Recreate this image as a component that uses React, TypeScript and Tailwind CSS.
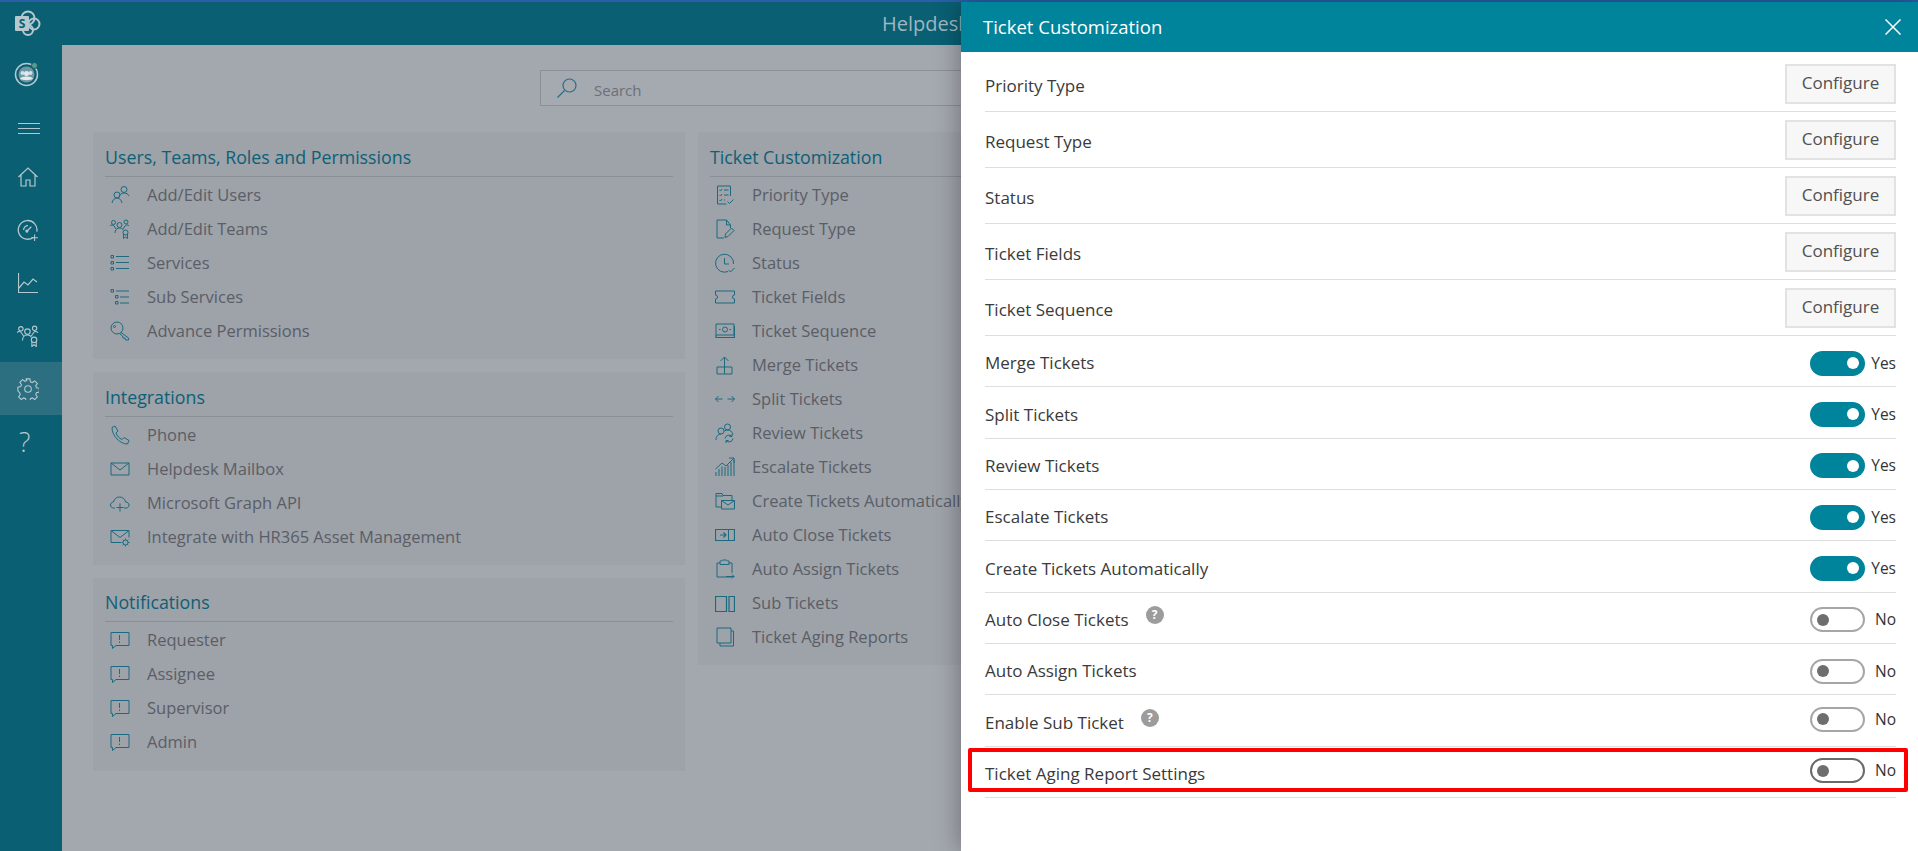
import React from 'react';

const Ico = ({ children, size = 20, className = '' }: { children: React.ReactNode; size?: number; className?: string }) => (
  <svg width={size} height={size} viewBox="0 0 20 20" fill="none" stroke="currentColor" strokeWidth={1} className={className}>
    {children}
  </svg>
);

const bell = (
  <Ico>
    <path d="M1 2.500h18v13H6l-3.500 3v-3H1z" />
    <path d="M9.500 5v5M9.500 11.500v1.500" />
  </Ico>
);

const teamsPaths = (
  <>
    <circle cx="3.500" cy="3.500" r="2" />
    <circle cx="16" cy="3" r="2" />
    <circle cx="9.500" cy="6" r="2.500" />
    <path d="M0 7c1-1.500 3-1.500 4 0l2 3M19 7c-1-1.500-3-1.500-4 0l-2 3M5 14c0-3 2-5 4.500-5 1.500 0 3 .8 3.500 2" />
    <circle cx="15.500" cy="13.500" r="2.500" />
    <path d="M13.500 15v4.500l2-1.500 2 1.500V15" />
  </>
);

const icons: Record<string, React.ReactNode> = {
  users: (
    <Ico>
      <circle cx="14" cy="4.500" r="3" />
      <path d="M9 12c.5-2.500 2.500-4 5-4s4 1 5 3" />
      <circle cx="7" cy="10" r="3" />
      <path d="M2 18c.5-3 2.500-5 5-5s4.500 2 5 5" />
    </Ico>
  ),
  teams: <Ico>{teamsPaths}</Ico>,
  services: (
    <Ico>
      <path d="M1 2.500h2.500V5H1zM1 8.500h2.500V11H1zM1 14.500h2.500V17H1z" />
      <path d="M6 3.500h13M6 9.500h13M6 15.500h13" />
    </Ico>
  ),
  subservices: (
    <Ico>
      <path d="M1 2.500h2.500V5H1zM5.500 8.500H8V11H5.500zM5.500 14.500H8V17H5.500z" />
      <path d="M6 4h13M10 10h9M10 16h9" />
    </Ico>
  ),
  key: (
    <Ico>
      <circle cx="7" cy="7" r="6" />
      <circle cx="4.500" cy="5.500" r="1" />
      <path d="M11 11.500l7.500 5.500v2h-3l-.5-2h-2l-.5-2-3-2.500" />
    </Ico>
  ),
  phone: (
    <Ico>
      <path d="M2 2.500L5 1l3 5-2 2c1 3 3 5 6 6.500l2-2 5 3-1.500 3.500C10 19 2 11 2 2.500z" />
    </Ico>
  ),
  mail: (
    <Ico>
      <path d="M1 4h18v12H1z" />
      <path d="M1 4l9 7 9-7" />
    </Ico>
  ),
  cloud: (
    <Ico>
      <path d="M5 15H3.500C1.500 15 .5 13.500 .5 12s1-3 3-3c.5-3 3-5 6-5s5.500 2 6 5c2 0 3.500 1.500 3.500 3s-1 3-3 3h-2" />
      <path d="M10 10.500v8M6.500 14.500h7" />
    </Ico>
  ),
  mailgear: (
    <Ico>
      <path d="M11 15.500H1V3.500h18v7" />
      <path d="M1 3.500l9 7 9-7" />
      <circle cx="15.500" cy="15.500" r="2.500" />
      <path d="M15.500 11.500v1.500M15.500 18v1.500M11.500 15.500H13M18 15.500h1.500M12.700 12.700l1 1M17.300 17.300l1 1M18.300 12.700l-1 1M13.700 17.300l-1 1" />
    </Ico>
  ),
  checklist: (
    <Ico>
      <path d="M15.500 11V1H2.500v18h9" />
      <path d="M4.500 5l1 1 1.500-2M4.500 10l1 1 1.500-2M4.500 15l1 1 1.500-2M9 5h4.500M9 10h4.500M9 15h1" />
      <path d="M12.500 16.500l2 2 4-4" />
    </Ico>
  ),
  docedit: (
    <Ico>
      <path d="M9 19H2V1h9.500l4 5v3" />
      <path d="M11.500 1v5h4" />
      <path d="M10 18.500l.5-3.500 6-6 2.500 2.500-6 6z" />
    </Ico>
  ),
  clock: (
    <Ico>
      <path d="M13 18.500A9 9 0 1 1 18.500 11" />
      <path d="M9.500 5v6h4.500" />
      <path d="M13.500 17l2 2 4-4" />
    </Ico>
  ),
  ticket: (
    <Ico>
      <path d="M.5 4h19v4a2 2 0 0 0 0 4v4H.5v-4a2 2 0 0 0 0-4z" />
    </Ico>
  ),
  money: (
    <Ico>
      <path d="M1 3h18v11H1z" />
      <path d="M1 14v2.500h18.500V5" strokeWidth={1.200} />
      <circle cx="10" cy="8.500" r="2.500" />
      <path d="M4 8.500h1.500M14.500 8.500H16" />
    </Ico>
  ),
  merge: (
    <Ico>
      <path d="M2 12h7.500v7H2zM9.500 12H17v7H9.500z" />
      <path d="M9.500 12V2M5.500 6l4-4 4 4" />
    </Ico>
  ),
  split: (
    <Ico>
      <path d="M.5 10h7M3.500 7l-3 3 3 3M12.500 10h7M16.500 7l3 3-3 3" />
    </Ico>
  ),
  review: (
    <Ico>
      <circle cx="12.500" cy="4" r="3" />
      <circle cx="6" cy="8" r="3" />
      <path d="M1 17c0-3.500 2-6 5-6M9.500 8c1-.8 2-1 3-1 3 0 5 2 5.500 4.500" />
      <path d="M10 15.500a4 4 0 0 1 7-2M18 15.500a4 4 0 0 1-7 2M17 11v2.500h-2.500M11 20v-2.500h2.500" />
    </Ico>
  ),
  chartup: (
    <Ico>
      <path d="M1 19v-4M4 19v-7M7 19V9.500M10 19v-9M13 19V8M16 19V5M19 19V3" />
      <path d="M.5 12L7 6l4 3 8-8M14 1h5v5" />
    </Ico>
  ),
  folder: (
    <Ico>
      <path d="M6 16H1V2.500h6l1 2h9V9" />
      <path d="M6.500 9.500h13V18h-13z" />
      <path d="M6.500 9.500l6.500 4.500 6.500-4.500" />
      <path d="M1 5h7" />
    </Ico>
  ),
  closebox: (
    <Ico>
      <path d="M.5 4.500h19v11H.5z" strokeWidth={1.200} />
      <path d="M13.500 4.500v11" />
      <path d="M5 10h5.500M8.500 7.500L11 10l-2.500 2.500" strokeWidth={1.200} />
    </Ico>
  ),
  clipboard: (
    <Ico>
      <path d="M14 4h3v10M17 18H2V4h3" />
      <path d="M5 2h1.500l1-1h4l1 1H14v3.500H5z" />
      <path d="M11 17.500h8M17 15.500l2 2-2 2" />
    </Ico>
  ),
  sub: (
    <Ico>
      <path d="M.5 3.500h11v15H.5zM14 3.500h5.500v15H14z" strokeWidth={1.200} />
    </Ico>
  ),
  copy: (
    <Ico>
      <path d="M2 1h14v15H2z" />
      <path d="M5 16v3h13.500V4H16" />
    </Ico>
  ),
};

const sections = [
  {
    title: 'Users, Teams, Roles and Permissions',
    items: [
      ['users', 'Add/Edit Users'],
      ['teams', 'Add/Edit Teams'],
      ['services', 'Services'],
      ['subservices', 'Sub Services'],
      ['key', 'Advance Permissions'],
    ],
  },
  {
    title: 'Integrations',
    items: [
      ['phone', 'Phone'],
      ['mail', 'Helpdesk Mailbox'],
      ['cloud', 'Microsoft Graph API'],
      ['mailgear', 'Integrate with HR365 Asset Management'],
    ],
  },
  {
    title: 'Notifications',
    items: [
      ['bell', 'Requester'],
      ['bell', 'Assignee'],
      ['bell', 'Supervisor'],
      ['bell', 'Admin'],
    ],
  },
];

const ticketSection = {
  title: 'Ticket Customization',
  items: [
    ['checklist', 'Priority Type'],
    ['docedit', 'Request Type'],
    ['clock', 'Status'],
    ['ticket', 'Ticket Fields'],
    ['money', 'Ticket Sequence'],
    ['merge', 'Merge Tickets'],
    ['split', 'Split Tickets'],
    ['review', 'Review Tickets'],
    ['chartup', 'Escalate Tickets'],
    ['folder', 'Create Tickets Automatically'],
    ['closebox', 'Auto Close Tickets'],
    ['clipboard', 'Auto Assign Tickets'],
    ['sub', 'Sub Tickets'],
    ['copy', 'Ticket Aging Reports'],
  ],
};

function Card({ title, items, compact }: { title: string; items: string[][]; compact?: boolean }) {
  return (
    <div className={`overflow-hidden bg-[#9ea2a9] px-3 ${compact ? 'pb-[12px]' : 'pb-[11px]'}`}>
      <div className={`flex items-center border-b border-[#8a8e95] pt-[6px] text-[17.8px] font-medium text-[#0d6076] ${compact ? 'h-[44px]' : 'h-[45px]'}`}>
        {title}
      </div>
      <ul className="pt-[1px]">
        {items.map(([icon, label]) => (
          <li key={label} className="flex h-[34px] items-center whitespace-nowrap text-[16.5px] text-[#5a5e66]">
            <span className="ml-[5px] mr-[17px] flex w-[20px] justify-center text-[#1c6a80]">
              {icon === 'bell' ? bell : icons[icon]}
            </span>
            {label}
          </li>
        ))}
      </ul>
    </div>
  );
}

function Sidebar() {
  return (
    <aside className="flex w-[62px] shrink-0 flex-col bg-[#0a5f73]">
      <div className="flex h-[43px] items-center pl-[14px]">
        <svg width="27" height="27" viewBox="0 0 27 27" fill="none">
          <circle cx="14" cy="8" r="6.500" stroke="#b4c8ce" strokeWidth="2" />
          <circle cx="20" cy="14" r="5.500" stroke="#b4c8ce" strokeWidth="2" />
          <circle cx="14" cy="20" r="5" stroke="#b4c8ce" strokeWidth="2" />
          <rect x="1" y="6" width="14" height="15" rx="1" fill="#b4c8ce" />
          <text x="8" y="18" textAnchor="middle" fontSize="12" fontWeight="700" fill="#0a5f73" fontFamily="'Open Sans', sans-serif">S</text>
        </svg>
      </div>
      <div className="flex h-[58px] items-center pl-[14px]">
        <svg width="26" height="26" viewBox="0 0 26 26" fill="none">
          <circle cx="12.500" cy="13.500" r="11" stroke="#b4c8ce" strokeWidth="1.500" />
          <circle cx="12.500" cy="13.500" r="8" fill="#6f98a5" />
          <circle cx="8.500" cy="12" r="2" fill="#d5e0e3" />
          <circle cx="16.500" cy="12" r="2" fill="#d5e0e3" />
          <circle cx="12.500" cy="12.500" r="2.500" fill="#e2eaec" />
          <path d="M6 18c.5-3.500 12.500-3.500 13 0-3 1.500-10 1.500-13 0z" fill="#e2eaec" />
          <circle cx="20.500" cy="4.500" r="3" fill="#5f9a85" stroke="#0a5f73" />
        </svg>
      </div>
      <div className="ml-[18px] flex h-[47px] w-[22px] flex-col gap-[4px] pt-[20px]">
        <span className="h-px bg-[#b4c8ce]" />
        <span className="h-px bg-[#b4c8ce]" />
        <span className="h-px bg-[#b4c8ce]" />
      </div>
      <nav className="text-[#b4c8ce]">
        <div className="flex h-[53px] items-center pl-[18px]">
          <Ico size={20}>
            <path d="M.5 10L10 1l9.500 9M3 8v11h5v-6h4v6h5V8" strokeWidth={1.200} />
          </Ico>
        </div>
        <div className="flex h-[53px] items-center pl-[17px]">
          <Ico size={22}>
            <path d="M15 16.500a8.500 8.500 0 1 1 3-5" strokeWidth={1.200} />
            <path d="M6 10a4 4 0 0 1 4-4M9 11l4-4" strokeWidth={1.200} />
            <circle cx="9" cy="11" r="1" fill="currentColor" />
            <path d="M13 17h6M16 14v6" />
          </Ico>
        </div>
        <div className="flex h-[53px] items-center pl-[18px]">
          <Ico size={20}>
            <path d="M.5 0v19.500H20" strokeWidth={1.200} />
            <path d="M1 15l5-6 4 3 5-6 4 3" strokeWidth={1.200} />
          </Ico>
        </div>
        <div className="flex h-[53px] items-center pl-[17px]">
          <Ico size={22}>{teamsPaths}</Ico>
        </div>
        <div className="flex h-[53px] items-center bg-[#2c6f81] pl-[17px]">
          <Ico size={22}>
            <circle cx="10" cy="10" r="3" />
            <path d="M8.300 .8h3.400l.5 2.600 1.700.7 2.200-1.500 2.400 2.400-1.500 2.200.7 1.700 2.600.5v3.400l-2.600.5-.7 1.700 1.500 2.200-2.400 2.400-2.200-1.500-1.700.7-.5 2.600H8.300l-.5-2.600-1.700-.7-2.200 1.500-2.400-2.400 1.500-2.200-.7-1.700L.8 11.700V8.300l2.600-.5.700-1.700-1.500-2.200 2.400-2.400 2.200 1.500 1.700-.7z" />
          </Ico>
        </div>
        <div className="flex h-[53px] items-center pl-[19px] text-[27px] font-light leading-none">?</div>
      </nav>
    </aside>
  );
}

function Toggle({ on, dark, lift }: { on: boolean; dark?: boolean; lift?: boolean }) {
  return (
    <div className={`flex w-[86px] shrink-0 items-center justify-between ${lift ? '-translate-y-[3px]' : ''}`}>
      {on ? (
        <span className="flex h-[25px] w-[55px] items-center justify-end rounded-full bg-[#00849b] pr-[6px]">
          <span className="h-[12px] w-[12px] rounded-full bg-white" />
        </span>
      ) : (
        <span className={`flex h-[25px] w-[55px] items-center rounded-full border-2 bg-white pl-[5px] ${dark ? 'border-[#6a6a6a]' : 'border-[#a6a6a6]'}`}>
          <span className="h-[12px] w-[12px] rounded-full bg-[#6e6e6e]" />
        </span>
      )}
      <span className="text-[15.5px] font-normal text-[#333]">{on ? 'Yes' : 'No'}</span>
    </div>
  );
}

const configureRows = ['Priority Type', 'Request Type', 'Status', 'Ticket Fields', 'Ticket Sequence'];
const toggleRows: { label: string; on: boolean; help?: boolean; dark?: boolean; lift?: boolean }[] = [
  { label: 'Merge Tickets', on: true },
  { label: 'Split Tickets', on: true },
  { label: 'Review Tickets', on: true },
  { label: 'Escalate Tickets', on: true },
  { label: 'Create Tickets Automatically', on: true },
  { label: 'Auto Close Tickets', on: false, help: true },
  { label: 'Auto Assign Tickets', on: false },
  { label: 'Enable Sub Ticket', on: false, help: true, lift: true },
  { label: 'Ticket Aging Report Settings', on: false, dark: true, lift: true },
];

function Drawer() {
  return (
    <div className="absolute bottom-0 right-0 top-[2px] w-[957px] bg-white shadow-[0_0_24px_rgba(0,0,0,0.35)]">
      <div className="flex h-[50px] items-center justify-between bg-[#00849b] pl-[22px] pr-[17px] text-white">
        <span className="text-[18.5px] font-medium">Ticket Customization</span>
        <svg width="16" height="16" viewBox="0 0 16 16" stroke="white" strokeWidth="1.500">
          <path d="M.5 .5l15 15M15.500 .5l-15 15" />
        </svg>
      </div>
      <div className="pl-[24px] pr-[22px] pt-[4px] text-[17px] font-medium text-[#3a3a3a]">
        {configureRows.map(label => (
          <div key={label} className="flex h-[56px] items-center justify-between border-b border-[#dedede]">
            <span className="translate-y-[2px]">{label}</span>
            <button className="h-[40px] w-[111px] border-2 border-[#e2e2e2] bg-[#f7f7f7] pb-[2px] text-[17px] font-normal text-[#505050]">
              Configure
            </button>
          </div>
        ))}
        {toggleRows.map(row => (
          <div key={row.label} className="flex h-[51.33px] items-center justify-between border-b border-[#dedede] pt-[4px]">
            <span className="flex items-start">
              {row.label}
              {row.help && (
                <span className="ml-[17px] mt-[-1px] flex h-[18px] w-[18px] items-center justify-center rounded-full bg-[#9c9c9c] text-[12px] font-bold leading-none text-white">
                  ?
                </span>
              )}
            </span>
            <Toggle on={row.on} dark={row.dark} lift={row.lift} />
          </div>
        ))}
      </div>
      {/* annotation round the last row */}
      <div className="absolute left-[7px] top-[746px] h-[44px] w-[940px] rounded-[2px] border-4 border-[#ff0000]" />
    </div>
  );
}

export default function App() {
  return (
    <div className="relative flex h-[851px] w-[1918px] flex-col overflow-hidden bg-[#a3a7ae]" style={{ fontFamily: "'Open Sans', sans-serif" }}>
      <div className="h-[2px] shrink-0 bg-[#2b5ea8]" />
      <div className="flex min-h-0 flex-1">
        <Sidebar />
        <main className="min-w-0 flex-1">
          <header className="flex h-[43px] items-center bg-[#0a5f73] pl-[820px] text-[20px] text-[#9fb7bf]">Helpdesk</header>
          <div className="px-[31px] pt-[25px]">
            <div className="mx-auto flex h-[36px] w-[900px] items-center border border-[#8b8f96] bg-[#a5a9b0] pl-[15px] text-[15px] text-[#6c7078]">
              <svg width="22" height="22" viewBox="0 0 22 22" fill="none" stroke="#2a6f85" strokeWidth="1.200">
                <circle cx="13.500" cy="8.500" r="6.500" />
                <path d="M8.500 13.500L1.500 20.500" />
              </svg>
              <span className="ml-[16px] translate-y-[2px]">Search</span>
            </div>
            <div className="mt-[26px] grid grid-cols-[592px_592px_592px] items-start gap-x-[13px]">
              <div className="flex flex-col gap-[13px]">
                {sections.map(section => (
                  <Card key={section.title} title={section.title} items={section.items} compact={section.title === 'Notifications'} />
                ))}
              </div>
              <Card title={ticketSection.title} items={ticketSection.items} />
            </div>
          </div>
        </main>
      </div>
      <Drawer />
    </div>
  );
}
